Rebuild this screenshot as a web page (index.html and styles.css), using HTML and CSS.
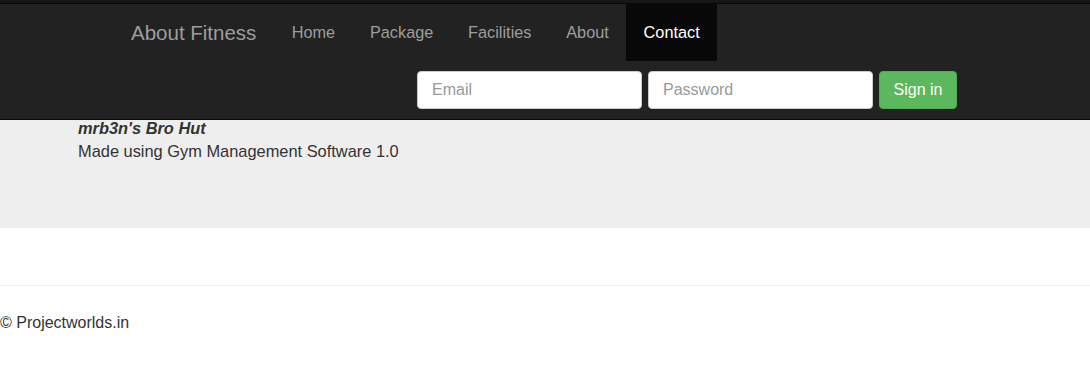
FILE: index.html
```html
<!DOCTYPE html>
<html lang="en">
<head>
    <meta charset="UTF-8">
    <meta name="viewport" content="width=device-width, initial-scale=1.0">
    <title>About Fitness</title>
    <link rel="stylesheet" href="styles.css">
</head>
<body>
    <div class="top-strip"></div>
    <nav class="navbar">
        <div class="container">
            <div class="nav-row">
                <a class="brand" href="#">About Fitness</a>
                <ul class="nav-links">
                    <li><a href="#">Home</a></li>
                    <li><a href="#">Package</a></li>
                    <li><a href="#">Facilities</a></li>
                    <li><a href="#">About</a></li>
                    <li class="active"><a href="#">Contact</a></li>
                </ul>
            </div>
            <form class="nav-form">
                <input type="text" class="form-input" placeholder="Email">
                <input type="password" class="form-input" placeholder="Password">
                <button type="button" class="btn-success">Sign in</button>
            </form>
        </div>
    </nav>

    <div class="jumbotron">
        <div class="jumbo-title">mrb3n's Bro Hut</div>
        <div>Made using Gym Management Software 1.0</div>
    </div>

    <footer class="footer">
        <hr>
        <p>&copy; Projectworlds.in</p>
    </footer>
</body>
</html>
```

FILE: styles.css
```css
body {
    font-family: "Liberation Sans", Arial, sans-serif;
    font-size: 16.4px;
    line-height: 23px;
    margin: 0;
    padding: 0;
    background-color: #fff;
    color: #333;
}
.top-strip {
    height: 3px;
    background-color: #161616;
}
.navbar {
    background-color: #222;
    border-top: 1px solid #080808;
    border-bottom: 1px solid #080808;
}
.container {
    width: 825px;
    margin: 0 auto;
    padding: 0 16px 0 15px;
}
.nav-row {
    display: flex;
    height: 57px;
}
.brand {
    font-size: 20.5px;
    line-height: 57px;
    color: #9d9d9d;
    text-decoration: none;
    margin-left: -1px;
    padding-right: 18px;
}
.nav-links {
    display: flex;
    list-style: none;
    margin: 0;
    padding: 0;
}
.nav-links a {
    display: block;
    padding: 0 17.4px;
    font-size: 16.3px;
    line-height: 57px;
    color: #9d9d9d;
    text-decoration: none;
}
.nav-links .active a {
    background-color: #080808;
    color: #fff;
}
.nav-form {
    display: flex;
    justify-content: flex-end;
    gap: 6px;
    margin: 10px 0;
}
.form-input {
    width: 225px;
    height: 38px;
    box-sizing: border-box;
    padding: 0 14px;
    font-family: inherit;
    font-size: 16px;
    color: #555;
    background-color: #fff;
    border: 1px solid #ccc;
    border-radius: 4px;
}
.form-input::placeholder {
    color: #999;
}
.btn-success {
    width: 78px;
    height: 38px;
    font-family: inherit;
    font-size: 16px;
    color: #fff;
    background-color: #5cb85c;
    border: 1px solid #4cae4c;
    border-radius: 4px;
}
.jumbotron {
    display: flow-root;
    background-color: #eee;
    height: 108px;
    box-sizing: border-box;
    padding: 0 0 0 78px;
}
.jumbo-title {
    margin-top: -3px;
    font-weight: bold;
    font-style: italic;
}
.footer hr {
    margin: 57px 0 0;
    border: 0;
    border-top: 1px solid #eee;
}
.footer p {
    margin: 25px 0 0;
    font-size: 16px;
}
```
